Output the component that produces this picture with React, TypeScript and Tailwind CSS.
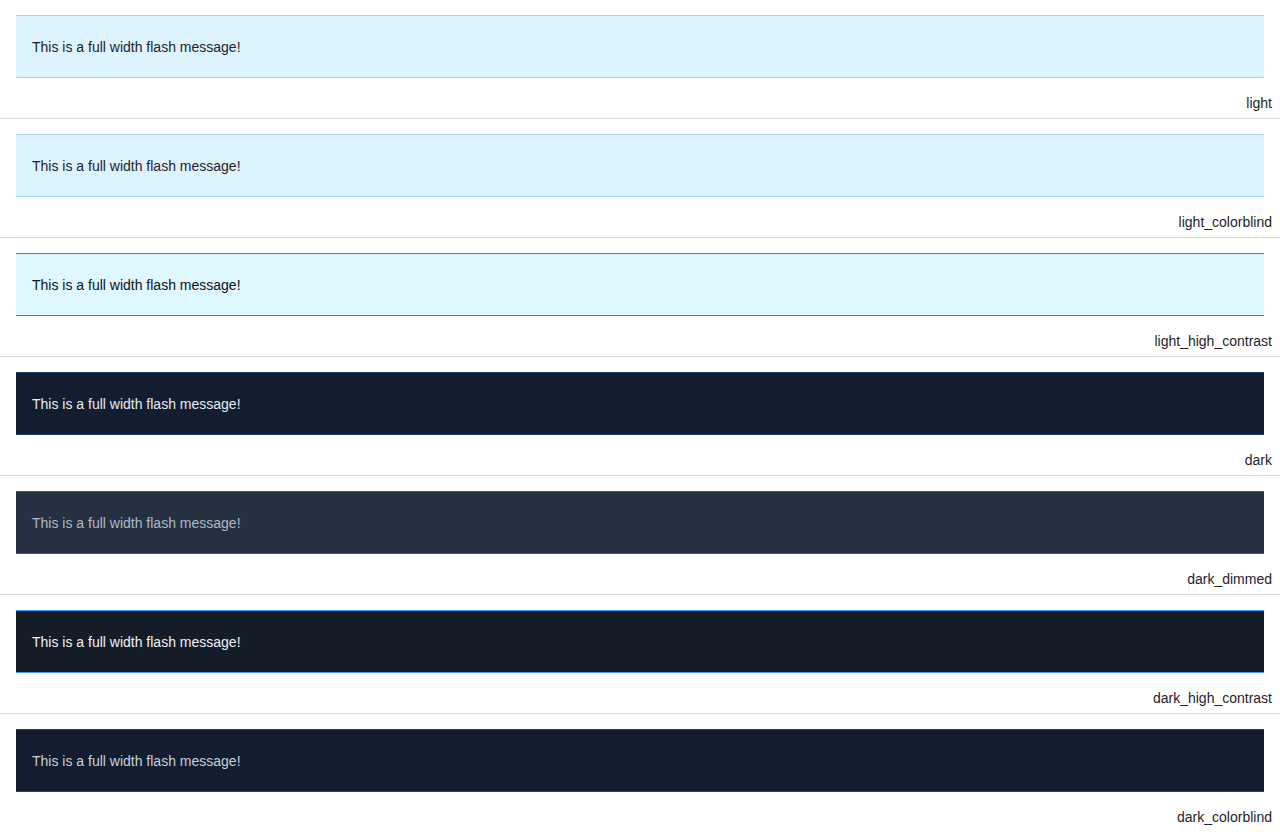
const themes = [
  { name: "light", box: "bg-[#ddf4ff] border-[#a6d5fa] text-[#1f2328]" },
  { name: "light_colorblind", box: "bg-[#ddf4ff] border-[#a6d5fa] text-[#1f2328]" },
  { name: "light_high_contrast", box: "bg-[#dff7ff] border-[#3f7fd6] text-[#0e1116]" },
  { name: "dark", box: "bg-[#121d2f] border-[#1e4379] text-[#e6edf3]" },
  { name: "dark_dimmed", box: "bg-[#253040] border-[#3a5684] text-[#adbac7]" },
  { name: "dark_high_contrast", box: "bg-[#131c27] border-[#409eff] text-[#f0f3f6]" },
  { name: "dark_colorblind", box: "bg-[#121d2f] border-[#1e4379] text-[#c9d1d9]" },
];

export default function App() {
  return (
    <div className="bg-white font-['Liberation_Sans',Arial,sans-serif] text-sm">
      {themes.map((t) => (
        <section key={t.name} className="pt-[15px] pb-[4px] border-b border-[#d6d6d6]">
          <div className={`mx-4 border-y px-4 pt-[21px] pb-[19px] leading-[21px] ${t.box}`}>
            This is a full width flash message!
          </div>
          <div className="mt-[15px] pr-2 text-right leading-[21px] text-[#1f2328]">{t.name}</div>
        </section>
      ))}
    </div>
  );
}
